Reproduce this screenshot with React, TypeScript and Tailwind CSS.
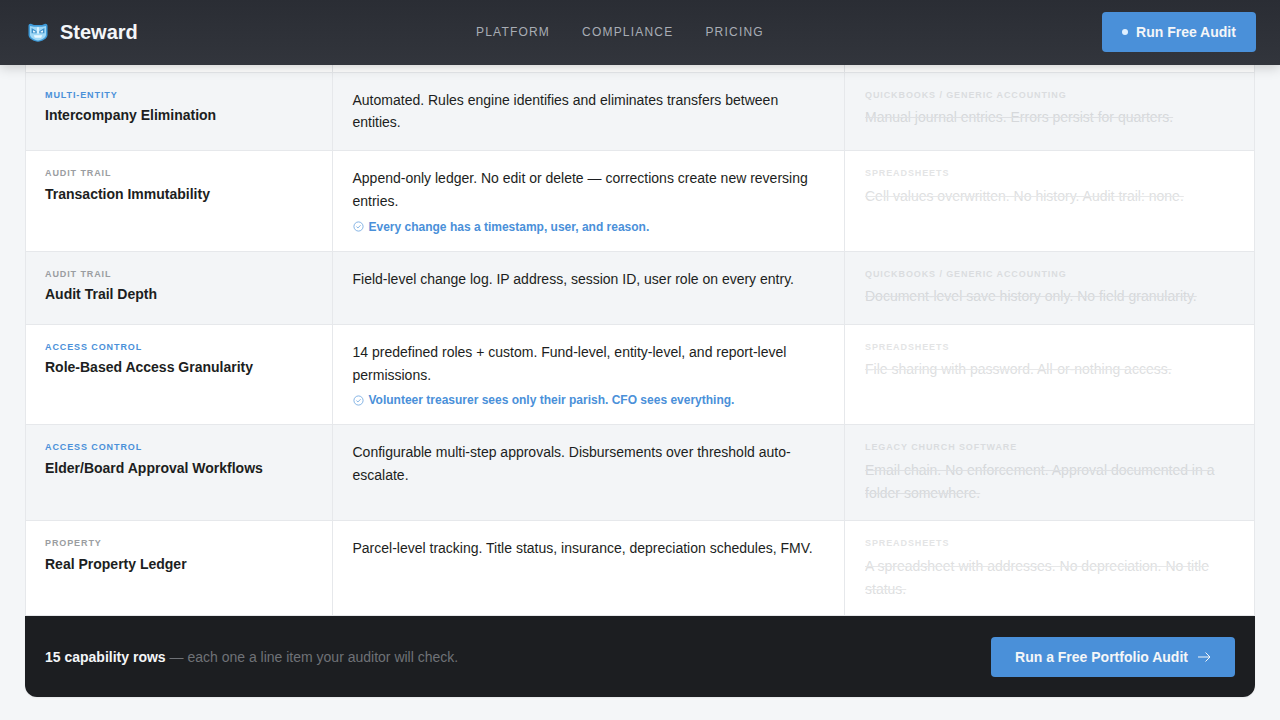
import React from "react";

type Row = {
  tag: string;
  blue?: boolean;
  name: string;
  body: string;
  note?: string;
  src: string;
  old: string;
  shade: boolean;
  h: string;
};

const rows: Row[] = [
  { tag: "MULTI-ENTITY", blue: true, name: "Intercompany Elimination", body: "Automated. Rules engine identifies and eliminates transfers between entities.", src: "QUICKBOOKS / GENERIC ACCOUNTING", old: "Manual journal entries. Errors persist for quarters.", shade: true, h: "h-[78.7px]" },
  { tag: "AUDIT TRAIL", name: "Transaction Immutability", body: "Append-only ledger. No edit or delete — corrections create new reversing entries.", note: "Every change has a timestamp, user, and reason.", src: "SPREADSHEETS", old: "Cell values overwritten. No history. Audit trail: none.", shade: false, h: "h-[100.4px]" },
  { tag: "AUDIT TRAIL", name: "Audit Trail Depth", body: "Field-level change log. IP address, session ID, user role on every entry.", src: "QUICKBOOKS / GENERIC ACCOUNTING", old: "Document-level save history only. No field granularity.", shade: true, h: "h-[73.1px]" },
  { tag: "ACCESS CONTROL", blue: true, name: "Role-Based Access Granularity", body: "14 predefined roles + custom. Fund-level, entity-level, and report-level permissions.", note: "Volunteer treasurer sees only their parish. CFO sees everything.", src: "SPREADSHEETS", old: "File sharing with password. All-or-nothing access.", shade: false, h: "h-[100.4px]" },
  { tag: "ACCESS CONTROL", blue: true, name: "Elder/Board Approval Workflows", body: "Configurable multi-step approvals. Disbursements over threshold auto-escalate.", src: "LEGACY CHURCH SOFTWARE", old: "Email chain. No enforcement. Approval documented in a folder somewhere.", shade: true, h: "h-[95.8px]" },
  { tag: "PROPERTY", name: "Real Property Ledger", body: "Parcel-level tracking. Title status, insurance, depreciation schedules, FMV.", src: "SPREADSHEETS", old: "A spreadsheet with addresses. No depreciation. No title status.", shade: false, h: "h-[95.2px]" },
];

function Logo() {
  return (
    <svg width="20" height="19" viewBox="0 0 20 20" preserveAspectRatio="none" className="shrink-0">
      <path d="M0.5 3 C0.5 1.4 2 0.4 3.5 1 L6 2.2 H14 L16.5 1 C18 0.4 19.5 1.4 19.5 3 V12.5 C19.5 16.5 14 19 10 19.8 C6 19 0.5 16.5 0.5 12.5 Z" fill="#3f9bd9" />
      <path d="M2 3.2 L6 4 H14 L18 3.2 V12.3 C18 15.5 13.5 17.6 10 18.4 C6.5 17.6 2 15.5 2 12.3 Z" fill="#9fd8f6" />
      <path d="M3.6 5.2 L8.6 8.4 V10.8 H3.6 Z M16.4 5.2 L11.4 8.4 V10.8 H16.4 Z" fill="#3d8fc9" />
      <path d="M9.2 4.6 H10.8 V11 H9.2 Z M5.8 13 H14.2 L13.2 15.4 H6.8 Z" fill="#e8f7ff" />
      <path d="M5 7.6 L7.4 9 V9.9 H5 Z M15 7.6 L12.6 9 V9.9 H15 Z" fill="#e8f7ff" />
    </svg>
  );
}

function Check() {
  return (
    <svg width="11" height="11" viewBox="0 0 12 12" fill="none" stroke="#4a90d9" strokeWidth="0.9" className="shrink-0 opacity-80">
      <circle cx="6" cy="6" r="5" />
      <path d="M3.8 6.1 L5.4 7.6 L8.3 4.6" />
    </svg>
  );
}

function TableRow({ r }: { r: Row }) {
  const bg = r.shade ? "bg-[#f3f5f7]" : "bg-white";
  return (
    <div className={`grid grid-cols-[306.5px_512.5px_409px] ${r.h} ${bg} border-b border-[#e6e8eb]`}>
      <div className="border-r border-[#e6e8eb] pl-[19px] pt-[15.9px]">
        <div className={`text-[9px] leading-[13px] font-bold tracking-[0.1em] ${r.blue ? "text-[#4a90d9]" : "text-[#9a9da1]"}`}>{r.tag}</div>
        <div className="mt-[3.6px] text-[14px] leading-[20px] font-bold text-[#1c1e21]">{r.name}</div>
      </div>
      <div className="border-r border-[#e6e8eb] px-5 pt-4">
        <div className="text-[14px] leading-[22.75px] text-[#1c1e21]">{r.body}</div>
        {r.note && (
          <div className="mt-[4px] flex items-center gap-[5px] text-[12px] leading-[20px] font-bold text-[#4a90d9]">
            <Check />
            <span>{r.note}</span>
          </div>
        )}
      </div>
      <div className="px-5 pt-[15.9px] opacity-[0.27]">
        <div className="text-[9px] leading-[13px] font-bold tracking-[0.1em] text-[#9a9da1]">{r.src}</div>
        <div className="mt-[4.6px] text-[14px] leading-[23.1px] text-[#8a8d91] line-through decoration-[#a8abaf]">{r.old}</div>
      </div>
    </div>
  );
}

export default function App() {
  return (
    <div className="h-[720px] w-[1280px] overflow-hidden bg-[#f4f6f8] font-['Liberation_Sans',Arial,sans-serif]">
      <header className="relative z-10 flex h-[65px] items-center justify-between border-b border-[#32353c] bg-gradient-to-b from-[#2a2d34] to-[#32353c] pl-[28px] pr-[24px] shadow-[0_2px_12px_rgba(0,0,0,0.2)]">
        <div className="flex items-center gap-3">
          <Logo />
          <span className="text-[20px] font-bold text-[#f4f6f8]">Steward</span>
        </div>
        <nav className="flex gap-8 text-[12px] tracking-[0.1em] text-[#a8adb5]">
          <span>PLATFORM</span>
          <span>COMPLIANCE</span>
          <span>PRICING</span>
        </nav>
        <button className="flex h-10 w-[154px] items-center justify-center gap-[8px] rounded bg-[#4a90d9] text-[14px] font-bold text-[#f4f6f8]">
          <span className="h-[6px] w-[6px] rounded-full bg-[#e0f0ff]" />
          Run Free Audit
        </button>
      </header>
      <main className="mx-[25px] w-[1230px]">
        <div className="border-x border-[#e6e8eb]">
          <div className="grid h-[7.7px] grid-cols-[306.5px_512.5px_409px] border-b border-[#e6e8eb] bg-white">
            <div className="border-r border-[#e6e8eb]" />
            <div className="border-r border-[#e6e8eb]" />
          </div>
          {rows.map((r) => (
            <TableRow key={r.name} r={r} />
          ))}
        </div>
        <div className="flex h-[80.7px] items-center justify-between rounded-b-xl bg-[#1c1e21] pl-5 pr-5 shadow-[0_1px_2px_rgba(0,0,0,0.06)]">
          <div className="pt-[1px] text-[14px]">
            <span className="font-bold text-[#f4f6f8]">15 capability rows</span>
            <span className="text-[#6f7277]"> — each one a line item your auditor will check.</span>
          </div>
          <button className="flex h-10 w-[244px] items-center justify-center gap-[9px] rounded bg-[#4a90d9] pt-[1px] text-[14px] font-bold text-[#f4f6f8]">
            Run a Free Portfolio Audit
            <svg width="14" height="14" viewBox="0 0 14 14" fill="none" stroke="#f4f6f8" strokeWidth="1">
              <path d="M1 7 H13 M8.5 2.5 L13 7 L8.5 11.5" />
            </svg>
          </button>
        </div>
      </main>
    </div>
  );
}
